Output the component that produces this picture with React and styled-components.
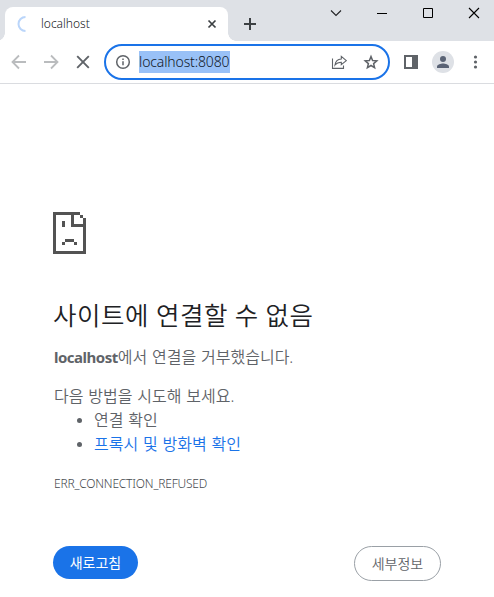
import React from "react";
import styled, { createGlobalStyle } from "styled-components";

const Global = createGlobalStyle`
  * { box-sizing: border-box; }
  body {
    margin: 0;
    background: #fff;
    font-family: "Noto Sans", "Noto Sans CJK KR", sans-serif;
    color: #5f6368;
  }
`;

const Window = styled.div`
  width: 494px;
  height: 597px;
  overflow: hidden;
  display: flex;
  flex-direction: column;
  background: #fff;
`;

const TabStrip = styled.header`
  height: 41px;
  flex: none;
  display: flex;
  background: #dee1e6;
  padding-left: 5px;
`;

const Tab = styled.div`
  position: relative;
  width: 223px;
  height: 34px;
  margin-top: 7px;
  padding: 0 10px 0 11px;
  display: flex;
  align-items: center;
  background: #fff;
  border-radius: 8px 8px 0 0;

  &::before,
  &::after {
    content: "";
    position: absolute;
    bottom: 0;
    width: 8px;
    height: 8px;
  }
  &::before {
    left: -8px;
    background: radial-gradient(circle at 0 0, transparent 7.5px, #fff 8px);
  }
  &::after {
    right: -8px;
    background: radial-gradient(circle at 100% 0, transparent 7.5px, #fff 8px);
  }
`;

const TabTitle = styled.span`
  flex: 1;
  margin-left: 9px;
  font-size: 12px;
  line-height: 16px;
  font-weight: 300;
  color: #202124;
`;

const Icon = styled.svg`
  display: block;
  flex: none;
  fill: none;
  stroke: ${(p) => p.$color || "#5f6368"};
  stroke-width: ${(p) => p.$weight || 2};
`;

const NewTab = styled.div`
  margin: 17px 0 0 15px;
`;

const WindowControls = styled.div`
  margin-left: auto;
  padding: 5px 12px 0 0;
  height: 21px;
  display: flex;
  gap: 30px;
`;

const Toolbar = styled.nav`
  height: 43px;
  flex: none;
  display: flex;
  align-items: center;
  padding: 0 10px;
  border-bottom: 1px solid #dadce0;
`;

const NavButtons = styled.div`
  display: flex;
  gap: 16px;
  padding-left: 1px;
`;

const AddressBar = styled.div`
  width: 286px;
  height: 36px;
  margin-left: 13px;
  padding: 0 9px;
  display: flex;
  align-items: center;
  border: 2px solid #1a73e8;
  border-radius: 18px;
`;

const Url = styled.span`
  height: 22px;
  margin: 0 auto 0 8px;
  width: 91px;
  white-space: nowrap;
  font-size: 14px;
  line-height: 22px;
  font-weight: 300;
  letter-spacing: -0.13px;
  color: #101828;
  background: #99c1f7;
`;

const AddressActions = styled.div`
  display: flex;
  gap: 16px;
`;

const ToolbarActions = styled.div`
  margin-left: 13px;
  display: flex;
  align-items: center;
`;

const Avatar = styled.div`
  width: 22px;
  height: 22px;
  margin: 0 16px 0 13px;
  border-radius: 50%;
  background: #dee1e6;
`;

const Page = styled.main`
  flex: 1;
  padding: 128px 53px 0 53px;
`;

const Title = styled.h1`
  margin: 43px 0 0 0;
  font-size: 25.5px;
  line-height: 34px;
  font-weight: 350;
  letter-spacing: 0.55px;
  word-spacing: 0.6px;
  color: #202124;
  font-family: "Noto Sans CJK KR", sans-serif;
  white-space: nowrap;
`;

const Paragraph = styled.p`
  margin: ${(p) => p.$top}px 0 0 1px;
  font-size: 16px;
  line-height: 24px;
  font-weight: 350;
  word-spacing: 0.7px;
  white-space: nowrap;
`;

const Host = styled.strong`
  font-weight: 700;
  font-size: 15px;
  letter-spacing: -0.5px;
`;

const Suggestions = styled.ul`
  margin: 0;
  padding: 0 0 0 41px;
  font-size: 16px;
  line-height: 24px;
  font-weight: 350;
  word-spacing: 0.7px;
`;

const Suggestion = styled.li`
  height: 24px;
  white-space: nowrap;

  &::marker {
    font-size: 14px;
  }
`;

const Link = styled.a`
  color: #1a73e8;
`;

const ErrorCode = styled.div`
  margin: 18px 0 0 1px;
  font-size: 12px;
  line-height: 20px;
  font-weight: 300;
  letter-spacing: -0.2px;
  color: #45494d;
`;

const Buttons = styled.div`
  margin-top: 52px;
  display: flex;
  justify-content: space-between;
  align-items: flex-start;
`;

const Button = styled.button`
  width: ${(p) => (p.$primary ? 85 : 87)}px;
  height: ${(p) => (p.$primary ? 33 : 35)}px;
  padding: 0 0 2px;
  border: ${(p) => (p.$primary ? "0" : "1px solid #9aa0a6")};
  border-radius: 18px;
  background: ${(p) => (p.$primary ? "#1a73e8" : "#fff")};
  color: ${(p) => (p.$primary ? "#fff" : "#5f6368")};
  font: ${(p) => (p.$primary ? 400 : 350)} 14px "Noto Sans CJK KR", sans-serif;
`;

const cells = [
  [0, 0, 9, 1], [0, 1, 1, 13], [1, 13, 10, 1], [10, 2, 1, 11],
  [9, 1, 1, 1], [6, 1, 1, 4], [7, 4, 3, 1],
  [3, 3, 1, 2], [4, 9, 3, 1], [3, 10, 1, 1], [7, 10, 1, 1],
];

const SadPage = () => (
  <Icon width="33" height="42" viewBox="0 0 11 14" $weight="0" shapeRendering="crispEdges">
    {cells.map(([x, y, w, h]) => (
      <rect key={`${x}-${y}`} x={x} y={y} width={w} height={h} fill="#535353" />
    ))}
  </Icon>
);

export default function App() {
  return (
    <Window>
      <Global />
      <TabStrip>
        <Tab>
          <Icon width="16" height="16" $color="#bad5fa"><path d="M9.5 1A7 7 0 0 0 9.5 15" /></Icon>
          <TabTitle>localhost</TabTitle>
          <Icon width="12" height="12" $color="#3c4043" $weight="1.7"><path d="M2.5 2.5l7 7M9.5 2.5l-7 7" /></Icon>
        </Tab>
        <NewTab>
          <Icon width="14" height="14" $color="#3c4043"><path d="M7 1v12M1 7h12" /></Icon>
        </NewTab>
        <WindowControls>
          <Icon width="16" height="16" $color="#202124" $weight="1.1"><path d="M3 5.5l5 5 5-5" /></Icon>
          <Icon width="16" height="16" $color="#000" $weight="1"><path d="M3 8.5h10" /></Icon>
          <Icon width="16" height="16" $color="#000" $weight="1"><path d="M3.5 3.5h9v9h-9z" /></Icon>
          <Icon width="16" height="16" $color="#000" $weight="1.1"><path d="M3 3l10 10M13 3L3 13" /></Icon>
        </WindowControls>
      </TabStrip>
      <Toolbar>
        <NavButtons>
          <Icon width="16" height="16" $color="#babcbe" $weight="1.8"><path d="M15 8H2M8 1.5L1.5 8 8 14.5" /></Icon>
          <Icon width="16" height="16" $color="#babcbe" $weight="1.8"><path d="M1 8h13M8 1.5L14.5 8 8 14.5" /></Icon>
          <Icon width="16" height="16" $weight="1.9"><path d="M2.2 2.2l11.6 11.6M13.8 2.2L2.2 13.8" /></Icon>
        </NavButtons>
        <AddressBar>
          <Icon width="16" height="16" $weight="1.5"><circle cx="8" cy="8" r="6.3" /><path d="M8 7.2v4M8 4.5v1.6" /></Icon>
          <Url>localhost:8080</Url>
          <AddressActions>
            <Icon width="16" height="16" $weight="1.1">
              <path d="M1.5 4.5v9.9h11V11.5M4 11C4.5 7.2 6.7 5.2 10.3 5V2.4L15.3 6.6l-5 4.1V8.2C7.3 8.2 5.6 8.9 4 11z" />
            </Icon>
            <Icon width="16" height="16" $weight="1.5">
              <path d="M8 2.6l1.6 3.9 4.2.3-3.2 2.8 1 4.1L8 11.5l-3.6 2.2 1-4.1-3.2-2.8 4.2-.3z" />
            </Icon>
          </AddressActions>
        </AddressBar>
        <ToolbarActions>
          <Icon width="16" height="16"><path d="M2 2h12v12H2z" /><path d="M9 2h5v12H9z" fill="#5f6368" stroke="none" /></Icon>
          <Avatar>
            <Icon width="22" height="22" $weight="0">
              <g fill="#5a6375"><circle cx="11" cy="8" r="3" /><path d="M5 17v-1.5c0-2 4-3 6-3s6 1 6 3V17z" /></g>
            </Icon>
          </Avatar>
          <Icon width="10" height="16" $weight="0">
            <g fill="#5f6368"><circle cx="5.5" cy="3" r="1.6" /><circle cx="5.5" cy="8" r="1.6" /><circle cx="5.5" cy="13" r="1.6" /></g>
          </Icon>
        </ToolbarActions>
      </Toolbar>
      <Page>
        <SadPage />
        <Title>사이트에 연결할 수 없음</Title>
        <Paragraph $top={14}><Host>localhost</Host>에서 연결을 거부했습니다.</Paragraph>
        <Paragraph $top={15}>다음 방법을 시도해 보세요.</Paragraph>
        <Suggestions>
          <Suggestion>연결 확인</Suggestion>
          <Suggestion><Link>프록시 및 방화벽 확인</Link></Suggestion>
        </Suggestions>
        <ErrorCode>ERR_CONNECTION_REFUSED</ErrorCode>
        <Buttons>
          <Button $primary>새로고침</Button>
          <Button>세부정보</Button>
        </Buttons>
      </Page>
    </Window>
  );
}
